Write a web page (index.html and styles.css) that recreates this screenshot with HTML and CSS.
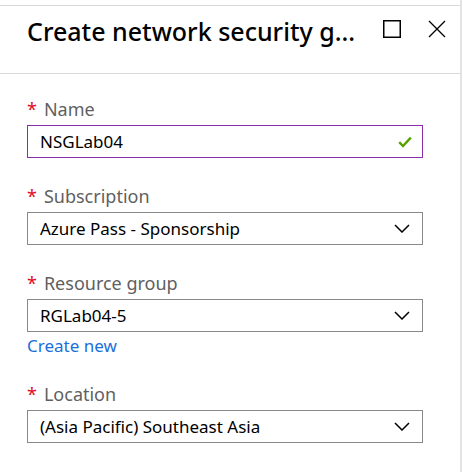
FILE: index.html
```html
<!DOCTYPE html>
<html>
<head>
<meta charset="utf-8">
<link rel="stylesheet" href="styles.css">
</head>
<body>
<div class="panel">
  <div class="header">
    <h1 class="title">Create network security g...</h1>
    <div class="actions">
      <svg class="icon" width="18" height="18" viewBox="0 0 18 18"><rect x="0.75" y="0.75" width="16.5" height="16.5" fill="none" stroke="#000" stroke-width="1.5"/></svg>
      <svg class="icon" width="18" height="18" viewBox="0 0 18 18"><path d="M1 1L17 17M17 1L1 17" fill="none" stroke="#000" stroke-width="1.3"/></svg>
    </div>
  </div>
  <div class="form">
    <div class="field">
      <div class="label"><span class="req">*</span>Name</div>
      <div class="box box-valid">
        <span class="value">NSGLab04</span>
        <svg class="check" width="14" height="12" viewBox="0 0 14 12"><path d="M1.2 6.2L5 10L12.8 1.6" fill="none" stroke="#57a300" stroke-width="2.4"/></svg>
      </div>
    </div>
    <div class="field">
      <div class="label"><span class="req">*</span>Subscription</div>
      <div class="box">
        <span class="value">Azure Pass - Sponsorship</span>
        <svg class="chev" width="16" height="9" viewBox="0 0 16 9"><path d="M1 1L8 8L15 1" fill="none" stroke="#000" stroke-width="1.5"/></svg>
      </div>
    </div>
    <div class="field">
      <div class="label"><span class="req">*</span>Resource group</div>
      <div class="box">
        <span class="value">RGLab04-5</span>
        <svg class="chev" width="16" height="9" viewBox="0 0 16 9"><path d="M1 1L8 8L15 1" fill="none" stroke="#000" stroke-width="1.5"/></svg>
      </div>
      <a class="link" href="#">Create new</a>
    </div>
    <div class="field">
      <div class="label"><span class="req">*</span>Location</div>
      <div class="box">
        <span class="value">(Asia Pacific) Southeast Asia</span>
        <svg class="chev" width="16" height="9" viewBox="0 0 16 9"><path d="M1 1L8 8L15 1" fill="none" stroke="#000" stroke-width="1.5"/></svg>
      </div>
    </div>
  </div>
</div>
</body>
</html>
```
FILE: styles.css
```css
html, body {
  margin: 0;
  padding: 0;
  background: #fff;
}
body {
  font-family: "Noto Sans", "Open Sans", sans-serif;
  width: 463px;
  height: 472px;
  overflow: hidden;
}
.panel {
  width: 462px;
  height: 472px;
  box-sizing: border-box;
  border-right: 2px solid #e3e3e3;
  padding-top: 5px;
}
.header {
  height: 67px;
  border-top: 1px solid #d9d9d9;
  border-bottom: 1px solid #d9d9d9;
  display: flex;
  align-items: flex-start;
  padding-left: 27px;
  padding-right: 14px;
}
.title {
  margin: 9px 0 0 0;
  font-size: 25px;
  font-weight: 500;
  color: #000;
  line-height: 32px;
  white-space: nowrap;
  flex: 1;
}
.actions {
  display: flex;
  gap: 27px;
  margin-top: 14px;
}
.icon { display: block; }
.form {
  padding: 23px 0 0 27px;
}
.field {
  width: 396px;
  margin-bottom: 26px;
}
.label {
  font-size: 18px;
  line-height: 24px;
  color: #5f5f5f;
  margin-bottom: 4px;
}
.req {
  color: #e00b1c;
  margin-right: 7px;
}
.box {
  height: 33px;
  box-sizing: border-box;
  border: 1px solid #8a8886;
  display: flex;
  align-items: center;
  padding: 0 12px 0 12px;
}
.box-valid {
  border-color: #8d2ea6;
}
.value {
  flex: 1;
  font-size: 17px;
  color: #000;
  white-space: nowrap;
}
.check { display: block; margin-right: -2px; }
.chev { display: block; }
.link {
  display: block;
  font-size: 17px;
  line-height: 20px;
  margin-top: 4px;
  color: #1a6fdb;
  text-decoration: none;
}
```
